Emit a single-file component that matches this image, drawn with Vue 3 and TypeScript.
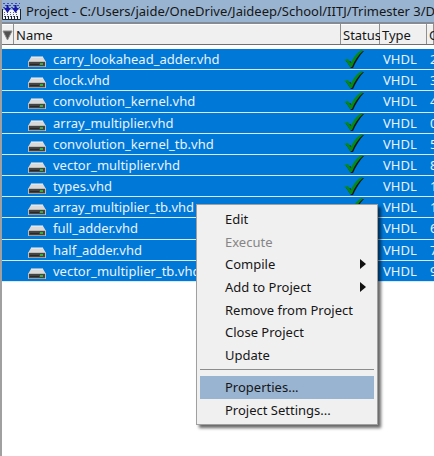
<script setup lang="ts">
interface ProjectFile {
  name: string
  order: number
}

interface MenuEntry {
  label: string
  disabled?: boolean
  submenu?: boolean
  active?: boolean
}

const title = 'Project - C:/Users/jaide/OneDrive/Jaideep/School/IITJ/Trimester 3/D'

const files: ProjectFile[] = [
  { name: 'carry_lookahead_adder.vhd', order: 2 },
  { name: 'clock.vhd', order: 3 },
  { name: 'convolution_kernel.vhd', order: 4 },
  { name: 'array_multiplier.vhd', order: 0 },
  { name: 'convolution_kernel_tb.vhd', order: 5 },
  { name: 'vector_multiplier.vhd', order: 8 },
  { name: 'types.vhd', order: 10 },
  { name: 'array_multiplier_tb.vhd', order: 1 },
  { name: 'full_adder.vhd', order: 6 },
  { name: 'half_adder.vhd', order: 7 },
  { name: 'vector_multiplier_tb.vhd', order: 9 },
]

const projectActions: MenuEntry[] = [
  { label: 'Edit' },
  { label: 'Execute', disabled: true },
  { label: 'Compile', submenu: true },
  { label: 'Add to Project', submenu: true },
  { label: 'Remove from Project' },
  { label: 'Close Project' },
  { label: 'Update' },
]

const settingsActions: MenuEntry[] = [
  { label: 'Properties...', active: true },
  { label: 'Project Settings...' },
]

const menuGroups: MenuEntry[][] = [projectActions, settingsActions]
</script>

<template>
  <main class="window">
    <header class="titlebar">
      <svg class="logo" width="19" height="18" viewBox="0 0 19 18" aria-hidden="true">
        <path d="M1 1.500h17M3 3.500h15M1 5.500h17" stroke="#3d4fb4" stroke-dasharray="2 2" />
        <path d="M1 8h17v9H1z" fill="#f2f4fa" />
        <path d="M2 10.500h15M2 12.500h15M2 14.500h15" stroke="#59617a" stroke-dasharray="1 2" />
        <path d="M5.500 3v5M13.500 3v5" stroke="#1616a8" stroke-width="2" />
        <path d="M2 6h7l-3.500 5zM10 6h7l-3.500 5z" fill="#1616a8" />
        <path d="M.5 7v10.500h18V7M3.500 14v3M6.500 14v3M9.500 14v3M12.500 14v3M15.500 14v3" fill="none" stroke="#20242c" />
      </svg>
      <h1>{{ title }}</h1>
    </header>

    <table class="files">
      <colgroup>
        <col class="c-sort" /><col /><col class="c-status" /><col class="c-type" /><col class="c-order" />
      </colgroup>
      <thead>
        <tr>
          <th class="sort">
            <svg width="11" height="12" viewBox="0 0 11 12" aria-hidden="true">
              <path d="M1 2h9L5.500 11z" fill="#505050" stroke="#8a8a8a" />
            </svg>
          </th>
          <th>Name</th>
          <th>Status</th>
          <th>Type</th>
          <th>Order</th>
        </tr>
      </thead>
      <tbody>
        <tr v-for="file in files" :key="file.name">
          <td colspan="2">
            <div class="file">
              <svg width="18" height="12" viewBox="0 0 18 12" aria-hidden="true">
                <path d="M3 1h12l3 5H0z" fill="#d9d9d9" />
                <path d="M3 1h12" stroke="#f2f2f2" />
                <path d="M0 5.500h18V11H0z" fill="#444" />
                <path d="M0 5.500h18M.5 5v6M17.500 5v6" stroke="#bcbcbc" fill="none" />
                <path d="M1 10.500h16" stroke="#9b9b9b" />
                <path d="M2 8.500h9" stroke="#292929" />
                <path d="M12 8h3" stroke="#31b13b" stroke-width="2" />
              </svg>
              <span>{{ file.name }}</span>
            </div>
          </td>
          <td class="status">
            <svg width="21" height="19" viewBox="0 0 21 19" aria-hidden="true">
              <path d="M2 11l4 0 2 2C11 8 14 3 18 1h2C16 5 12 11 9 18H7C5 15 4 13 2 11z" fill="#07151c" />
              <path d="M0 10l4-1 3 4C9 8 13 2 18 0l1 1C14 5 11 10 8 17H6C4 14 3 11 0 10z" fill="#078a12" />
            </svg>
          </td>
          <td>VHDL</td>
          <td>{{ file.order }}</td>
        </tr>
      </tbody>
    </table>

    <nav class="menu" aria-label="Project actions">
      <ul v-for="(group, index) in menuGroups" :key="index">
        <li v-for="entry in group" :key="entry.label">
          <button type="button" :disabled="entry.disabled" :class="{ active: entry.active }">
            <span>{{ entry.label }}</span>
            <svg v-if="entry.submenu" width="6" height="10" viewBox="0 0 6 10" aria-hidden="true">
              <path d="M0 0l6 5-6 5z" fill="#111" />
            </svg>
          </button>
        </li>
      </ul>
    </nav>
  </main>
</template>

<style>
body {
  background: #fff;
}
</style>

<style scoped>
.window {
  position: relative;
  box-sizing: border-box;
  min-height: 100vh;
  overflow: hidden;
  border-left: 2px solid #a0a0a0;
  background: #fff;
  color: #161616;
  font-family: Tahoma, 'Noto Sans', sans-serif;
  font-size: 13px;
  line-height: 16px;
}

.titlebar {
  display: flex;
  align-items: center;
  gap: 5px;
  height: 22px;
  border-bottom: 2px solid #858b94;
  background: #99b4d1;
}

.logo {
  flex: none;
}

h1 {
  margin: 0;
  font-size: 13px;
  font-weight: 400;
  white-space: nowrap;
}

.files {
  width: 100%;
  height: 258px;
  table-layout: fixed;
  border-collapse: separate;
  border-spacing: 0;
}

.c-sort {
  width: 12px;
}

.c-status {
  width: 39px;
}

.c-type {
  width: 47px;
}

.c-order {
  width: 7px;
}

th {
  box-sizing: border-box;
  height: 25px;
  padding: 0 0 0 2px;
  overflow: hidden;
  border-bottom: 4px solid #fff;
  background: #f0f0f0;
  box-shadow: inset 0 -1px #707070, inset -1px 0 #909090, inset 0 1px #fff;
  font-weight: 400;
  text-align: left;
  white-space: nowrap;
}

.sort {
  padding: 0;
}

.sort svg {
  display: block;
}

td {
  padding: 0 0 0 3px;
  overflow: hidden;
  border-bottom: 1px solid #d9ebfb;
  background: #0078d7;
  color: #e8f3fd;
  white-space: nowrap;
}

.file {
  display: flex;
  align-items: center;
  gap: 7px;
  padding-left: 23px;
}

.file svg {
  flex: none;
  padding-top: 6px;
}

.status svg {
  display: block;
}

.menu {
  position: absolute;
  top: 204px;
  left: 194px;
  box-sizing: border-box;
  width: 182px;
  padding: 3px;
  border: 1px solid #a0a0a0;
  background: #f0f0f0;
  box-shadow: 3px 3px 3px rgb(0 0 0 / 60%);
}

.menu ul {
  display: grid;
  grid-auto-rows: 1fr;
  height: 158px;
  margin: 0;
  padding: 0;
  list-style: none;
}

.menu ul + ul {
  height: 45px;
  margin-top: 3px;
  padding-top: 6px;
  border-top: 1px solid #8c8c8c;
}

.menu li {
  display: flex;
}

button {
  display: flex;
  flex: 1;
  align-items: center;
  justify-content: space-between;
  padding: 0 8px 0 25px;
  border: 0;
  background: transparent;
  color: #161616;
  font: inherit;
  text-align: left;
}

button.active {
  background: #99b4d1;
}

button:disabled {
  color: #858585;
}
</style>
